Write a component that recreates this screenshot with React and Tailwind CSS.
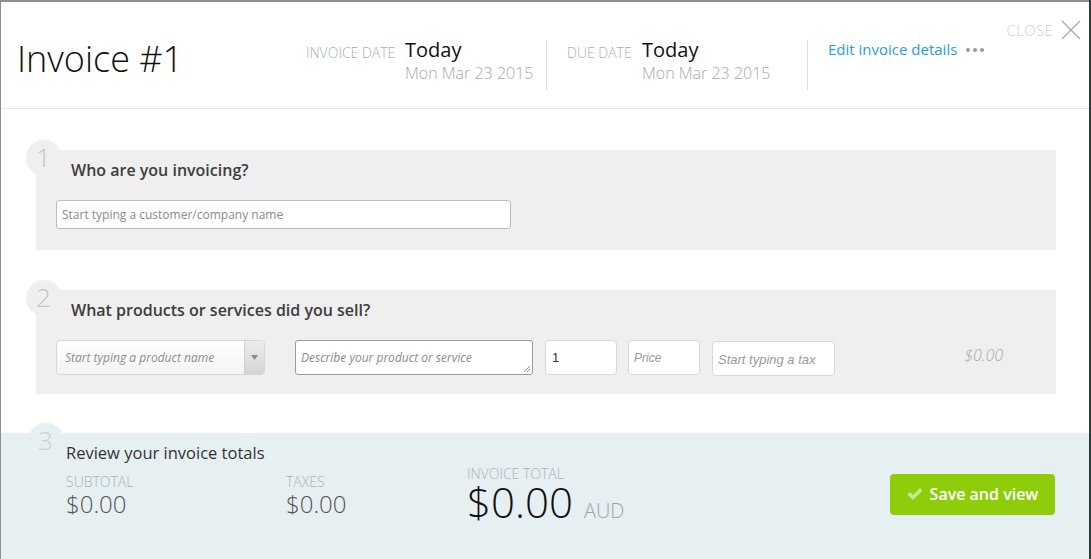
import React from "react";

const font = { fontFamily: '"Open Sans", "Liberation Sans", sans-serif' };

function StepBadge({ n, className }) {
  return (
    <div className={`absolute w-[36px] h-[36px] rounded-full flex justify-center ${className}`}>
      <span className="text-[26px] font-light leading-none mt-[4px] ml-[-1px]">{n}</span>
    </div>
  );
}

function DateBlock({ label, labelW, pl, w }) {
  return (
    <div className={`mt-[38px] h-[50px] border-r border-[#dcdcdc] flex ${pl} ${w}`}>
      <div className={`${labelW} text-[14px] leading-none font-light text-[#a3afb8] mt-[6px] uppercase`}>{label}</div>
      <div>
        <div className="text-[20px] leading-none text-[#111] mt-[0px]">Today</div>
        <div className="text-[16px] leading-none font-light text-[#a8a8a8] mt-[5px]">Mon Mar 23 2015</div>
      </div>
    </div>
  );
}

function App() {
  return (
    <div style={font} className="w-[1091px] h-[559px] bg-[#2d3b3c] flex overflow-hidden">
      <div className="w-[1089px] h-full bg-white border-l border-t-2 border-[#8e8e8e] flex flex-col">
        {/* header */}
        <div className="h-[107px] shrink-0 border-b border-[#e6e6e6] flex items-start">
          <div className="w-[305px] pl-[16px] mt-[39px] text-[36px] font-light leading-none text-[#111]">Invoice #1</div>
          <DateBlock label="Invoice date" labelW="w-[99px]" pl="" w="w-[241px]" />
          <DateBlock label="Due date" labelW="w-[75px]" pl="pl-[20px]" w="w-[261px]" />
          <div className="pl-[20px] mt-[40px] flex items-center">
            <span className="text-[15px] leading-none text-[#2b9ed6]">Edit invoice details</span>
            <span className="ml-[9px] flex gap-[3px]">
              <span className="w-[4px] h-[4px] rounded-full bg-[#9a9a9a]" />
              <span className="w-[4px] h-[4px] rounded-full bg-[#9a9a9a]" />
              <span className="w-[4px] h-[4px] rounded-full bg-[#9a9a9a]" />
            </span>
          </div>
          <div className="ml-auto mr-[8px] mt-[18px] flex items-center gap-[8px]">
            <span className="text-[15px] font-light leading-none text-[#cfcfcf] tracking-[0.3px]">CLOSE</span>
            <svg width="20" height="20" viewBox="0 0 20 20" stroke="#aaaaaa" strokeWidth="1.4" fill="none">
              <path d="M1 1 L19 19 M19 1 L1 19" />
            </svg>
          </div>
        </div>

        {/* step 1 */}
        <div className="relative ml-[35px] mt-[41px] w-[1020px] h-[100px] bg-[#efefef] pl-[35px] pt-[12px]">
          <StepBadge n="1" className="left-[-10px] top-[-10px] bg-[#efefef] text-[#c4c4c4]" />
          <div className="relative text-[16px] font-semibold leading-none text-[#3d3d3d]">Who are you invoicing?</div>
          <div className="relative ml-[-15px] mt-[22px] w-[455px] h-[29px] bg-white border border-[#bdbdbd] rounded-[3px] flex items-center pl-[5px]">
            <span className="text-[12px] text-[#8a8a8a]">Start typing a customer/company name</span>
          </div>
        </div>

        {/* step 2 */}
        <div className="relative ml-[35px] mt-[40px] w-[1020px] h-[104px] bg-[#efefef] pl-[35px] pt-[12px]">
          <StepBadge n="2" className="left-[-10px] top-[-10px] bg-[#efefef] text-[#c4c4c4]" />
          <div className="relative text-[16px] font-semibold leading-none text-[#3d3d3d]">What products or services did you sell?</div>
          <div className="relative ml-[-15px] mt-[22px] flex items-start">
            <div className="w-[209px] h-[35px] rounded-[4px] border border-[#d6d6d6] bg-gradient-to-b from-white to-[#f4f4f4] flex overflow-hidden">
              <div className="flex-1 flex items-center pl-[8px]">
                <span className="text-[12px] italic text-[#8c8c8c]">Start typing a product name</span>
              </div>
              <div className="w-[20px] border-l border-[#cfcfcf] bg-gradient-to-b from-[#ececec] to-[#d5d5d5] flex items-center justify-center">
                <svg width="7" height="5" viewBox="0 0 7 5"><path d="M0 0 L7 0 L3.5 5 Z" fill="#8a8a8a" /></svg>
              </div>
            </div>
            <div className="relative ml-[30px] w-[238px] h-[35px] bg-white border border-[#9c9c9c] rounded-[3px] flex items-center pl-[5px]">
              <span className="text-[12px] italic text-[#8a8a8a]">Describe your product or service</span>
              <svg className="absolute right-[1px] bottom-[1px]" width="8" height="8" viewBox="0 0 8 8" stroke="#777" strokeWidth="0.8">
                <path d="M1 7 L7 1 M4 7 L7 4" />
              </svg>
            </div>
            <div className="ml-[12px] w-[72px] h-[35px] bg-white border border-[#d8d8d8] rounded-[4px] flex items-center pl-[6px]">
              <span className="text-[13px] text-[#333]" style={{ fontFamily: '"Liberation Sans", sans-serif' }}>1</span>
            </div>
            <div className="ml-[11px] w-[72px] h-[35px] bg-white border border-[#d8d8d8] rounded-[4px] flex items-center pl-[5px]">
              <span className="text-[12px] italic text-[#999]" style={{ fontFamily: '"Liberation Sans", sans-serif' }}>Price</span>
            </div>
            <div className="ml-[12px] mt-[1px] w-[123px] h-[35px] bg-white border border-[#d8d8d8] rounded-[4px] flex items-center pl-[5px]">
              <span className="text-[13px] italic text-[#999] mt-[2px]" style={{ fontFamily: '"Liberation Sans", sans-serif' }}>Start typing a tax</span>
            </div>
            <div className="ml-auto mr-[53px] mt-[3px] text-[16px] italic font-light text-[#a9a9a9]">$0.00</div>
          </div>
        </div>

        {/* step 3 */}
        <div className="relative mt-[39px] flex-1 bg-[#e6eff2] pl-[65px] pt-[12px] pr-[34px]">
          <StepBadge n="3" className="left-[27px] top-[-10px] bg-[#e6eff2] text-[#c6d2d6]" />
          <div className="relative text-[16.5px] font-medium leading-none text-[#333]">Review your invoice totals</div>
          <div className="flex items-start mt-[5px]">
            <div className="w-[220px] mt-[8px]">
              <div className="text-[14px] font-light leading-none text-[#a8b3bb]">SUBTOTAL</div>
              <div className="text-[24px] font-light leading-none text-[#555] mt-[3px]">$0.00</div>
            </div>
            <div className="w-[181px] mt-[8px]">
              <div className="text-[14px] font-light leading-none text-[#a8b3bb]">TAXES</div>
              <div className="text-[24px] font-light leading-none text-[#555] mt-[3px]">$0.00</div>
            </div>
            <div>
              <div className="text-[14px] font-light leading-none text-[#a8b3bb]">INVOICE TOTAL</div>
              <div className="flex items-baseline">
                <span className="text-[42px] font-light leading-none text-[#111]">$0.00</span>
                <span className="ml-[11px] text-[20px] font-light text-[#a4a4a4]">AUD</span>
              </div>
            </div>
            <button className="ml-auto mt-[7px] w-[165px] h-[41px] rounded-[4px] bg-[#8fcd0b] flex items-center justify-center gap-[7px] text-white">
              <svg width="16" height="13" viewBox="0 0 16 13" fill="#c6e79a">
                <path d="M0.5 6.5 L3 4 L6 7 L13 0 L15.5 2.5 L6 12 Z" />
              </svg>
              <span className="text-[16px] font-semibold">Save and view</span>
            </button>
          </div>
        </div>
      </div>
    </div>
  );
}

export default App;
